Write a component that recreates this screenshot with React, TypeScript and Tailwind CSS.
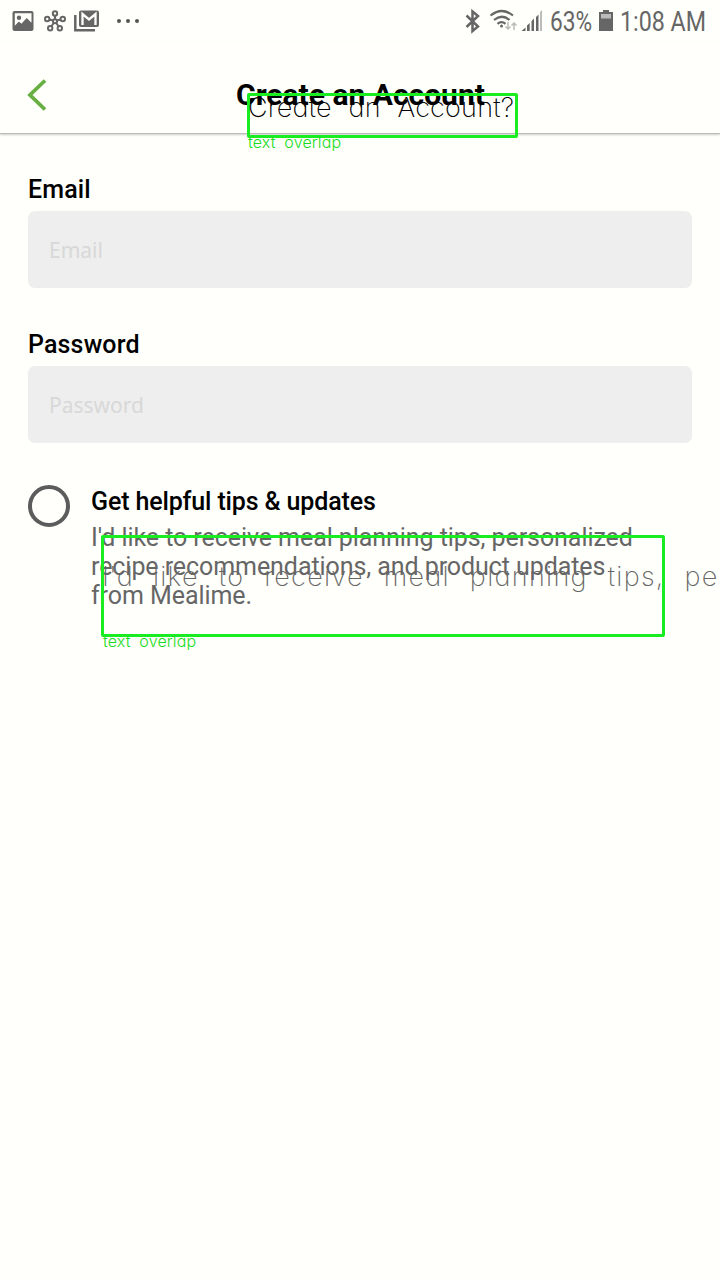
import React from "react";

function StatusBar() {
  return (
    <header className="flex h-[42px] items-center justify-between text-[#666]">
      <svg width="150" height="42" viewBox="0 0 150 42" fill="none">
        <rect x="12.500" y="11" width="21" height="20" rx="2" fill="#666" />
        <path fill="#fffffb" d="M14.800 13.300h16.700v9.400l-4.800-4.800-5.300 5.800-2.500-2.100-4.100 4.100Z" />
        <circle cx="19" cy="17.700" r="2.200" fill="#666" />
        <g stroke="#666" strokeWidth="2">
          <path d="M55 21V15M55 21L47.500 19M55 21l7.500-2M55 21l-4 6M55 21l4 6" />
          <g fill="#fffffb"><circle cx="55" cy="13.400" r="2.200" /><circle cx="47.200" cy="19" r="2.200" /><circle cx="62.800" cy="19" r="2.200" /><circle cx="50.200" cy="28.300" r="2.200" /><circle cx="59.800" cy="28.300" r="2.200" /></g>
          <circle cx="55" cy="21.300" r="2" fill="#fffffb" />
        </g>
        <path d="M75.300 15v15.300H95" stroke="#666" strokeWidth="2.500" />
        <rect x="79" y="10.500" width="20" height="16.500" rx="2" fill="#666" />
        <path d="M82.500 25V14l6.500 5.500 6.500-5.500v11" stroke="#fffffb" strokeWidth="2.300" />
        <g fill="#555"><circle cx="119" cy="21" r="2" /><circle cx="128" cy="21" r="2" /><circle cx="137" cy="21" r="2" /></g>
      </svg>
      <div className="flex h-[42px] items-center pr-[16px] font-['Roboto',sans-serif] text-[27px]">
        <svg width="82" height="42" viewBox="462 0 82 42" fill="none">
          <path d="M466.500 15.500l11.500 11-5.500 4.500V11.500l5.500 4.500-11.500 11" stroke="#666" strokeWidth="2.500" />
          <g stroke="#666" strokeWidth="2.200"><path d="M490.500 15.500q11.500-9 22.500 0M494 20q8-6.500 15.500 0M497.500 23.800q4-3.500 8 0" /></g>
          <circle cx="501.500" cy="26" r="1.500" fill="#666" />
          <g stroke="#bbb" strokeWidth="1.500"><path d="M508 22v7m-2.500-2.500 2.500 2.500 2.500-2.500M514 30v-7m-2.500 2.500 2.500-2.500 2.500 2.500" /></g>
          <path d="M521.500 31l4-3.500V31ZM527 31v-5.500l2.700-2.500v8ZM531.500 31V21l2.500-2.500V31ZM536 31V17l2.500-2.500V31Z" fill="#666" />
          <path d="M540 31V12l2-2v21Z" fill="#bbb" />
        </svg>
        <span className="block w-[48px] shrink-0 pl-[6px]"><span className="block w-max origin-left scale-x-[.84] pt-[2px] leading-[42px]">63%</span></span>
        <svg className="ml-[6px]" width="16" height="42" viewBox="0 0 16 42"><path d="M1 12h4v-2h6v2h4v19H1Z" fill="#666" /><path d="M3 14h10v4.500H3Z" fill="#bbb" /></svg>
        <span className="ml-[6px] block w-[84px] shrink-0"><span className="block w-max origin-left scale-x-[.86] pt-[2px] leading-[42px]">1:08 AM</span></span>
      </div>
    </header>
  );
}

function Field({ label, type }: { label: string; type: string }) {
  return (
    <label className="block h-[155px]">
      <span className="block h-[34px] text-[25px] leading-[25px] font-medium tracking-[.15px]">{label}</span>
      <input type={type} placeholder={label} className="block h-[77px] w-full rounded-[7px] bg-[#eee] px-[21px] font-['Noto_Sans',sans-serif] text-[21px] placeholder:text-[#d8d8d8]" />
    </label>
  );
}

export default function App() {
  return (
    <div className="relative h-[1280px] w-[720px] overflow-hidden bg-[#fffffb] font-['Roboto',sans-serif] text-black">
      <StatusBar />
      <nav className="flex h-[92px] items-center border-b border-[#bbb] pt-[14px] pl-[27px] shadow-[0_1px_2px_#ccc]">
        <svg width="20" height="32" viewBox="0 0 20 32" fill="none"><path d="M18 1.500 3 16l15 14.500" stroke="#67ae43" strokeWidth="3.800" /></svg>
        <h1 className="ml-[189px] text-[30px] leading-none font-bold whitespace-nowrap">Create an Account</h1>
      </nav>
      <main className="px-[28px] pt-[43px]">
        <Field label="Email" type="email" />
        <Field label="Password" type="password" />
        <section className="flex">
          <button aria-label="Get helpful tips & updates" className="mt-[-2px] h-[42px] w-[42px] shrink-0 rounded-full border-4 border-[#5c5c5c]" />
          <div className="flex flex-col gap-[7px] pl-[21px] text-[25px] leading-[29px] whitespace-nowrap">
            <h2 className="font-medium tracking-[-.13px]">Get helpful tips &amp; updates</h2>
            <p className="tracking-[-.07px] text-[#666]">I'd like to receive meal planning tips, personalized<br />recipe recommendations, and product updates<br />from Mealime.</p>
          </div>
        </section>
      </main>
      <div className="absolute top-[93px] left-[247px] h-[45px] w-[271px] rounded-[2px] border-[3px] border-[#19ed22] font-['Inter',sans-serif] leading-none whitespace-pre [font-feature-settings:'cv11']">
        <p className="mt-[-2px] ml-[-2px] h-[40px] text-[27px] font-extralight tracking-[.2px] [word-spacing:9px]">Create an Account?</p>
        <p className="ml-[-2px] text-[16px] font-light tracking-[.15px] text-[#19dc22] [word-spacing:4px]">text overlap</p>
      </div>
      <div className="absolute top-[535px] left-[101px] h-[102px] w-[564px] rounded-[2px] border-[3px] border-[#19ed22] font-['Inter',sans-serif] leading-none whitespace-pre [font-feature-settings:'cv11']">
        <p className="mt-[25px] ml-[-2px] h-[70px] text-[27px] font-extralight tracking-[1.3px] text-[#666] [word-spacing:11px]"><span className="tracking-[.2px]">I'd</span> like to receive meal planning tips, personalized</p>
        <p className="ml-[-1px] text-[16px] font-light tracking-[.15px] text-[#19dc22] [word-spacing:4px]">text overlap</p>
      </div>
    </div>
  );
}
